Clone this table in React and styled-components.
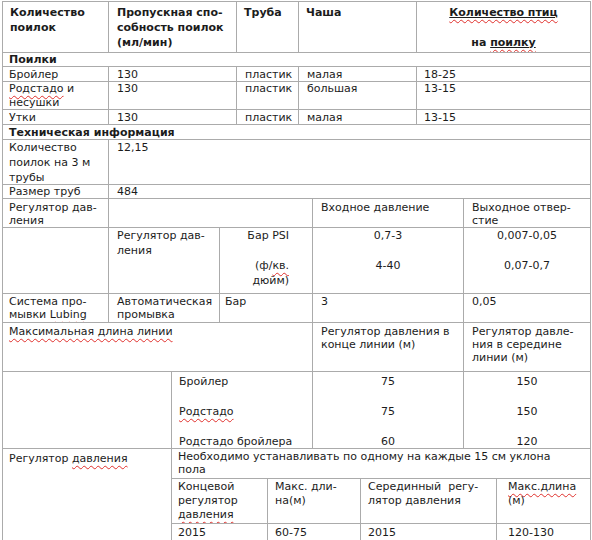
import React from 'react';
import styled, { createGlobalStyle } from 'styled-components';

const LINE = '#ababab';

const GlobalStyle = createGlobalStyle`
  html, body {
    margin: 0;
    padding: 0;
    background: #fff;
  }
  body {
    font-family: "DejaVu Sans", Verdana, sans-serif;
    font-size: 11px;
    color: #1c1c1c;
  }
  * {
    box-sizing: border-box;
  }
`;

const Page = styled.div`
  width: 592px;
  height: 540px;
  overflow: hidden;
  padding: 1px 0 0 2px;
`;

const Table = styled.div`
  width: 589px;
  border-left: 1px solid ${LINE};
  border-top: 1px solid ${LINE};
`;

const Row = styled.div`
  display: grid;
  grid-template-columns: ${p => p.$cols};
  height: ${p => p.$h}px;
`;

const Cell = styled.div`
  border-right: 1px solid ${LINE};
  border-bottom: 1px solid ${LINE};
  padding: ${p => p.$pt || 0}px ${p => p.$pr ?? 6}px 0 ${p => p.$pl ?? 6}px;
  line-height: ${p => p.$lh || 15}px;
  text-align: ${p => p.$align || 'left'};
  font-weight: ${p => (p.$bold ? 700 : 400)};
  white-space: nowrap;
  overflow: hidden;
`;

const Split = styled.div`
  display: grid;
  grid-template-columns: 169px 1fr;
`;

const Stack = styled.div`
  display: flex;
  flex-direction: column;
`;

const Spell = styled.span`
  text-decoration: underline wavy #e0302c;
  text-decoration-thickness: 1px;
  text-underline-offset: 3px;
`;

const Under = styled.span`
  text-decoration: underline solid #1c1c1c;
  text-decoration-thickness: 1px;
  text-underline-offset: 1px;
`;

const TOP = '106px 128px 62px 118px 174px';
const FULL = '588px';
const TWO = '106px 482px';
const REG = '106px 204px 151px 127px';
const FIVE = '106px 111px 93px 151px 127px';
const MAX = '310px 151px 127px';
const BLOCK = '169px 141px 151px 127px';
const NEST = '96px 93px 136px 94px';

export default function App() {
  return (
    <Page>
      <GlobalStyle />
      <Table>
        <Row $cols={TOP} $h={51}>
          <Cell $bold $pt={3} $pl={7}>Количество<br />поилок</Cell>
          <Cell $bold $pt={3} $pl={8}>Пропускная спо-<br />собность поилок<br />(мл/мин)</Cell>
          <Cell $bold $pt={3} $pl={7}>Труба</Cell>
          <Cell $bold $pt={3} $pl={7}>Чаша</Cell>
          <Cell $bold $pt={3} $align="center">
            <Under><Spell>Количество птиц</Spell></Under>
            <br />
            <br />
            на <Under><Spell>поилку</Spell></Under>
          </Cell>
        </Row>
        <Row $cols={FULL} $h={14}>
          <Cell $bold $lh={14}>Поилки</Cell>
        </Row>
        <Row $cols={TOP} $h={15}>
          <Cell>Бройлер</Cell>
          <Cell $pl={8}>130</Cell>
          <Cell $pl={8}>пластик</Cell>
          <Cell $pl={8}>малая</Cell>
          <Cell $pl={7}>18-25</Cell>
        </Row>
        <Row $cols={TOP} $h={28}>
          <Cell $lh={14}><Spell>Родстадо</Spell> и<br />несушки</Cell>
          <Cell $pl={8} $lh={14}>130</Cell>
          <Cell $pl={8} $lh={14}>пластик</Cell>
          <Cell $pl={8} $lh={14}>большая</Cell>
          <Cell $pl={7} $lh={14}>13-15</Cell>
        </Row>
        <Row $cols={TOP} $h={15}>
          <Cell>Утки</Cell>
          <Cell $pl={8}>130</Cell>
          <Cell $pl={8}>пластик</Cell>
          <Cell $pl={8}>малая</Cell>
          <Cell $pl={7}>13-15</Cell>
        </Row>
        <Row $cols={FULL} $h={15}>
          <Cell $bold>Техническая информация</Cell>
        </Row>
        <Row $cols={TWO} $h={45}>
          <Cell>Количество<br />поилок на 3 м<br />трубы</Cell>
          <Cell $pl={8}>12,15</Cell>
        </Row>
        <Row $cols={TWO} $h={14}>
          <Cell $lh={14}>Размер труб</Cell>
          <Cell $pl={8} $lh={14}>484</Cell>
        </Row>
        <Row $cols={REG} $h={29}>
          <Cell $pt={2} $lh={13}>Регулятор дав-<br />ления</Cell>
          <Cell />
          <Cell $pt={2} $lh={13} $pl={8}>Входное давление</Cell>
          <Cell $pt={2} $lh={13} $pl={8}>Выходное отвер-<br />стие</Cell>
        </Row>
        <Row $cols={FIVE} $h={66}>
          <Cell />
          <Cell $pl={8}>Регулятор дав-<br />ления</Cell>
          <Cell $align="right" $pr={23}>
            Бар PSI
            <br />
            <br />
            (ф/<Spell>кв.</Spell>
            <br />
            дюйм)
          </Cell>
          <Cell $align="center">0,7-3<br /><br />4-40</Cell>
          <Cell $align="center">0,007-0,05<br /><br />0,07-0,7</Cell>
        </Row>
        <Row $cols={FIVE} $h={29}>
          <Cell $pt={1} $lh={13}>Система про-<br />мывки <Spell>Lubing</Spell></Cell>
          <Cell $pt={1} $lh={13} $pl={8}>Автоматическая<br />промывка</Cell>
          <Cell $pt={1} $lh={13} $pl={5}>Бар</Cell>
          <Cell $pt={1} $lh={13} $pl={8}>3</Cell>
          <Cell $pt={1} $lh={13} $pl={8}>0,05</Cell>
        </Row>
        <Row $cols={MAX} $h={49}>
          <Cell $pt={2} $lh={13}><Spell>Максимальная длина линии</Spell></Cell>
          <Cell $pt={2} $lh={13} $pl={8}>Регулятор давления в<br />конце линии (м)</Cell>
          <Cell $pt={2} $lh={13} $pl={8}>Регулятор давле-<br />ния в середине<br />линии (м)</Cell>
        </Row>
        <Row $cols={BLOCK} $h={77}>
          <Cell />
          <Cell $pt={2} $pl={7}>
            Бройлер
            <br />
            <br />
            <Spell>Родстадо</Spell>
            <br />
            <br />
            <Spell>Родстадо</Spell> бройлера
          </Cell>
          <Cell $pt={2} $align="center">75<br /><br />75<br /><br />60</Cell>
          <Cell $pt={2} $align="center">150<br /><br />150<br /><br />120</Cell>
        </Row>
        <Split>
          <Cell $pt={2}>Регулятор <Spell>давления</Spell></Cell>
          <Stack>
            <Row $cols="419px" $h={30}>
              <Cell $pt={1} $lh={13}>
                Необходимо устанавливать по одному на каждые 15 см уклона
                <br />
                пола
              </Cell>
            </Row>
            <Row $cols={NEST} $h={45}>
              <Cell $pt={1} $lh={14}>Концевой<br />регулятор<br /><Spell>давления</Spell></Cell>
              <Cell $pt={1} $lh={14} $pl={7}>Макс. дли-<br />на(м)</Cell>
              <Cell $pt={1} $lh={14} $pl={7}>Серединный&nbsp; регу-<br />лятор давления</Cell>
              <Cell $pt={1} $lh={14} $pl={11}><Spell>Макс.длина</Spell><br />(м)</Cell>
            </Row>
            <Row $cols={NEST} $h={24}>
              <Cell $pt={1}>2015</Cell>
              <Cell $pt={1} $pl={7}>60-75</Cell>
              <Cell $pt={1} $pl={7}>2015</Cell>
              <Cell $pt={1} $pl={11}>120-130</Cell>
            </Row>
          </Stack>
        </Split>
      </Table>
    </Page>
  );
}
